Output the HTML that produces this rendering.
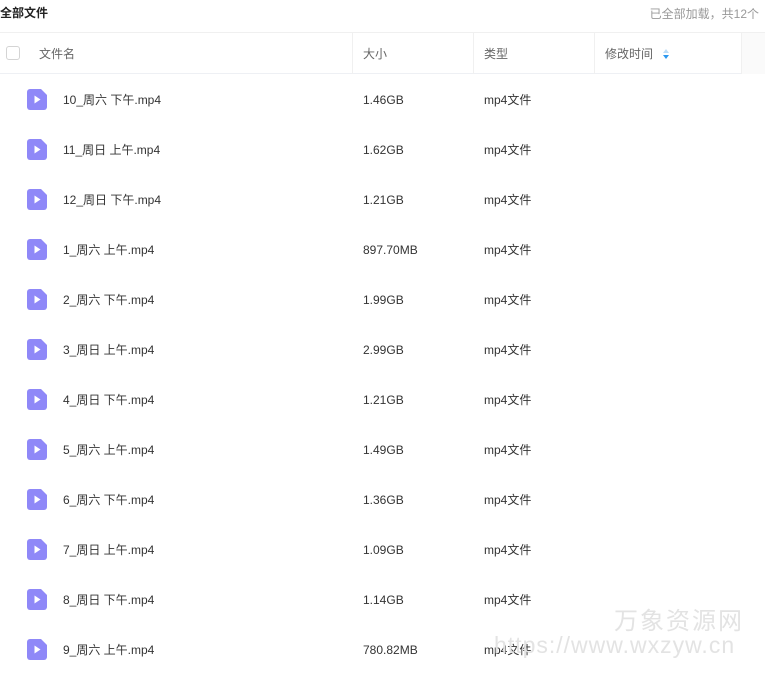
<!DOCTYPE html>
<html><head><meta charset="utf-8"><style>
*{margin:0;padding:0;box-sizing:border-box}
body{width:765px;height:680px;background:#fff;font-family:"Liberation Sans","Noto Sans CJK SC",sans-serif;color:#333;position:relative;overflow:hidden;font-size:12px}
span,div{line-height:16px}
.t{position:absolute;left:0;top:5px;font-size:12px;font-weight:bold;color:#222}
.r{position:absolute;right:6px;top:6px;font-size:12px;color:#999}
.hd{position:absolute;left:0;top:32px;width:765px;height:42px;border-top:1px solid #f0f0f0;border-bottom:1px solid #eef0f4}
.hd span{position:absolute;top:13px;color:#666;font-size:12px}
.dv{position:absolute;top:0;height:41px;width:1px;background:#f0f0f0}
.cb{position:absolute;left:6px;top:13px;width:14px;height:14px;border:1px solid #d4d4d4;border-radius:3px}
.row{position:absolute;left:0;width:765px;height:50px}
.row span{position:absolute;top:18px;font-size:12px;color:#333;line-height:16px}
.ic{position:absolute;left:27px;top:15px}
.wm{position:absolute;color:#e3e3e3;font-family:"Liberation Sans","Noto Sans CJK SC",sans-serif}
</style></head><body>
<div class="t">全部文件</div>
<div class="r">已全部加载，共12个</div>
<div class="hd">
<div class="cb"></div>
<span style="left:39px">文件名</span>
<div class="dv" style="left:352px"></div>
<span style="left:363px">大小</span>
<div class="dv" style="left:473px"></div>
<span style="left:484px">类型</span>
<div class="dv" style="left:594px"></div>
<span style="left:605px">修改时间</span>
<svg style="position:absolute;left:662px;top:16px" width="8" height="10"><path d="M4 0L7 4H1Z" fill="#bcdcf7"/><path d="M4 10L7 6H1Z" fill="#2c98f0"/></svg>
<div class="dv" style="left:741px"></div>
<div style="position:absolute;left:742px;top:0;width:23px;height:41px;background:#fafafa"></div>
</div>
<div id="rows"></div>
<div class="wm" style="left:614px;top:608px;font-size:24px;line-height:28px;letter-spacing:2px">万象资源网</div>
<div class="wm" style="left:494px;top:632px;font-size:23px;line-height:26px;letter-spacing:1px">https://www.wxzyw.cn</div>
<script>
var d=[["10_周六 下午.mp4","1.46GB"],["11_周日 上午.mp4","1.62GB"],["12_周日 下午.mp4","1.21GB"],["1_周六 上午.mp4","897.70MB"],["2_周六 下午.mp4","1.99GB"],["3_周日 上午.mp4","2.99GB"],["4_周日 下午.mp4","1.21GB"],["5_周六 上午.mp4","1.49GB"],["6_周六 下午.mp4","1.36GB"],["7_周日 上午.mp4","1.09GB"],["8_周日 下午.mp4","1.14GB"],["9_周六 上午.mp4","780.82MB"]];
var h="";d.forEach(function(x,i){h+='<div class="row" style="top:'+(74+i*50)+'px"><svg class="ic" width="20" height="21" viewBox="0 0 20 21"><path d="M3 0H14L20 6V18a3 3 0 0 1-3 3H3a3 3 0 0 1-3-3V3a3 3 0 0 1 3-3Z" fill="#8f88f8"/><path d="M7.5 6.5L13.5 10.5L7.5 14.5Z" fill="#fff"/></svg><span style="left:63px">'+x[0]+'</span><span style="left:363px">'+x[1]+'</span><span style="left:484px">mp4文件</span></div>'});
document.getElementById("rows").innerHTML=h;
</script>
</body></html>
